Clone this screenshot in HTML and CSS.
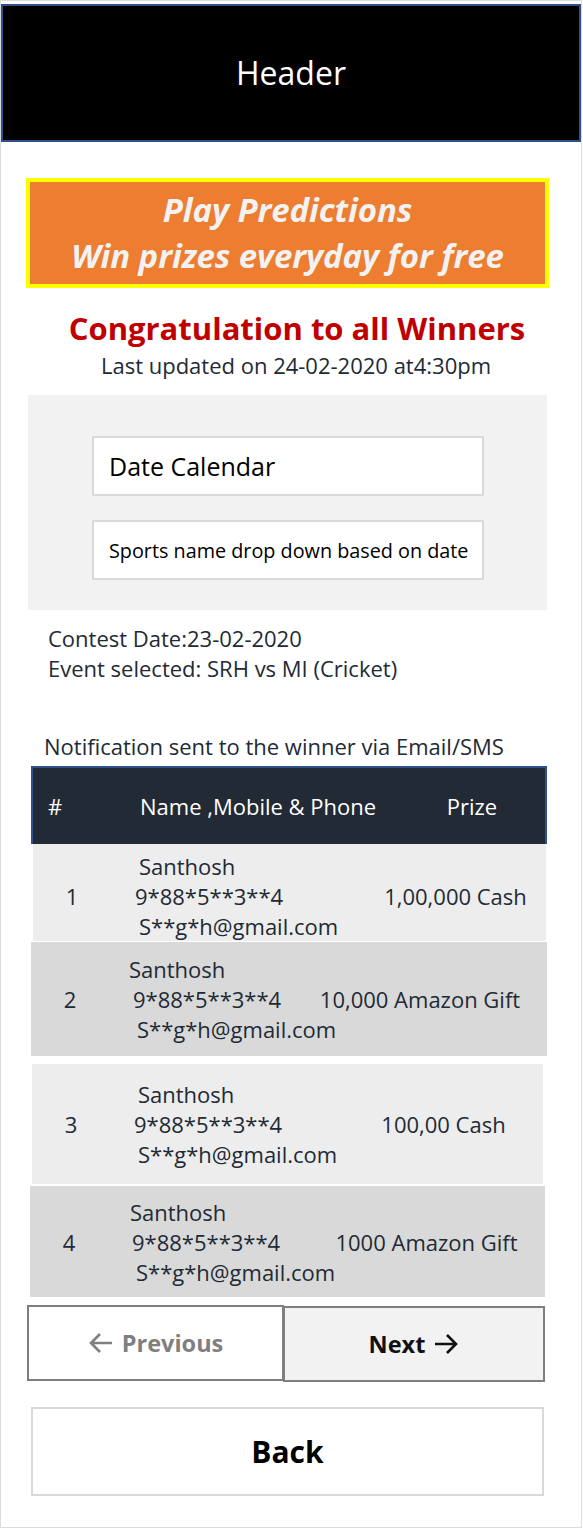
FILE: index.html
```html
<!DOCTYPE html>
<html>
<head>
<meta charset="utf-8">
<link rel="stylesheet" href="styles.css">
</head>
<body>
<div class="page">
  <div class="header">Header</div>
  <div class="banner">
    <div class="banner-inner">
      <div>Play Predictions</div>
      <div>Win prizes everyday for free</div>
    </div>
  </div>
  <h1 class="title">Congratulation to all Winners</h1>
  <div class="subtitle">Last updated on 24-02-2020 at4:30pm</div>
  <div class="filters">
    <div class="field field-date">Date Calendar</div>
    <div class="field field-sport">Sports name drop down based on date</div>
  </div>
  <div class="contest">
    <div>Contest Date:23-02-2020</div>
    <div>Event selected: SRH vs MI (Cricket)</div>
  </div>
  <div class="notice">Notification sent to the winner via Email/SMS</div>
  <div class="table">
    <div class="thead">
      <div class="c-num">#</div>
      <div class="c-name">Name ,Mobile &amp; Phone</div>
      <div class="c-prize">Prize</div>
    </div>
    <div class="row row-light r1">
      <div class="c-num">1</div>
      <div class="c-name"><span class="l1">Santhosh</span><span class="l2">9*88*5**3**4</span><span class="l3">S**g*h@gmail.com</span></div>
      <div class="c-prize">1,00,000 Cash</div>
    </div>
    <div class="row row-dark r2">
      <div class="c-num">2</div>
      <div class="c-name"><span class="l1">Santhosh</span><span class="l2">9*88*5**3**4</span><span class="l3">S**g*h@gmail.com</span></div>
      <div class="c-prize">10,000 Amazon Gift</div>
    </div>
    <div class="row row-light r3">
      <div class="c-num">3</div>
      <div class="c-name"><span class="l1">Santhosh</span><span class="l2">9*88*5**3**4</span><span class="l3">S**g*h@gmail.com</span></div>
      <div class="c-prize">100,00 Cash</div>
    </div>
    <div class="row row-dark r4">
      <div class="c-num">4</div>
      <div class="c-name"><span class="l1">Santhosh</span><span class="l2">9*88*5**3**4</span><span class="l3">S**g*h@gmail.com</span></div>
      <div class="c-prize">1000 Amazon Gift</div>
    </div>
  </div>
  <div class="pager">
    <div class="btn btn-prev">
      <svg width="26" height="22" viewBox="0 0 26 22"><path d="M24 11H3M12 2L3 11l9 9" fill="none" stroke="currentColor" stroke-width="2.6"/></svg>
      <span>Previous</span>
    </div>
    <div class="btn btn-next">
      <span>Next</span>
      <svg width="26" height="22" viewBox="0 0 26 22"><path d="M2 11h21M14 2l9 9-9 9" fill="none" stroke="currentColor" stroke-width="2.6"/></svg>
    </div>
  </div>
  <div class="back">Back</div>
</div>
</body>
</html>
```

FILE: styles.css
```css
* { box-sizing: border-box; }
html, body { margin: 0; padding: 0; background: #fff; }
body { font-family: "Open Sans", Lato, sans-serif; color: #222a35; }

.page {
  width: 582px;
  height: 1528px;
  border: 1px solid #dcdcdc;
  padding-top: 3px;
}

.header {
  height: 138px;
  background: #000;
  border: 2px solid #2f528f;
  color: #fff;
  font-size: 32px;
  display: flex;
  align-items: center;
  justify-content: center;
  padding-bottom: 2px;
}

.banner {
  margin: 36px 32px 0 25px;
  height: 110px;
  border: 4px solid #ffff00;
  background: #ed7d31;
}
.banner-inner {
  height: 100%;
  display: flex;
  flex-direction: column;
  align-items: center;
  justify-content: center;
  color: #f2f2f2;
  font-style: italic;
  font-weight: 700;
  font-size: 33px;
  line-height: 46px;
  letter-spacing: -0.1px;
}

.title {
  margin: 22px 0 0;
  text-align: center;
  color: #c00000;
  font-size: 31px;
  font-weight: 700;
  line-height: 36px;
  padding-left: 12px;
}
.subtitle {
  text-align: center;
  font-size: 22px;
  line-height: 30px;
  margin-top: 4px;
  padding-left: 10px;
  color: #222a35;
}

.filters {
  margin: 15px 34px 0 27px;
  height: 215px;
  background: #f2f2f2;
  padding: 41px 64px 0 64px;
  display: flex;
  flex-direction: column;
  gap: 24px;
}
.field {
  width: 392px;
  height: 60px;
  background: #fff;
  border: 2px solid #d9d9d9;
  display: flex;
  align-items: center;
  padding-left: 15px;
  color: #000;
  white-space: nowrap;
}
.field-date { font-size: 25px; }
.field-sport { font-size: 19.8px; }

.contest {
  margin: 13px 0 0 47px;
  font-size: 22px;
  line-height: 30px;
}
.notice {
  margin: 48px 0 0 43px;
  font-size: 22px;
  line-height: 30px;
}

.table {
  margin: 5px 34px 0 30px;
}
.thead, .row {
  display: grid;
  grid-template-columns: 78px 260px 1fr;
  align-items: center;
}
.thead {
  height: 78px;
  background: #222a35;
  border: 2px solid #2f528f;
  border-bottom: none;
  color: #fff;
  font-size: 22px;
  white-space: nowrap;
}
.thead .c-num { padding-left: 15px; }
.thead .c-name { padding-left: 29px; }
.thead .c-prize { text-align: center; padding-left: 28px; }

.row { font-size: 22px; color: #222a35; white-space: nowrap; }
.row .c-num { text-align: center; }
.row .c-name {
  display: flex;
  flex-direction: column;
  line-height: 30px;
  padding-left: 24px;
}
.row .c-prize { text-align: center; }
.row-light { background: #ededed; }
.row-dark { background: #d9d9d9; }

.r1 { height: 97px; margin-left: 2px; margin-right: 1px; padding-top: 6px; }
.r2 { height: 115px; border-top: 1px solid #fff; }
.r3 { height: 120px; margin-top: 8px; margin-left: 1px; margin-right: 4px; }
.r4 { height: 111px; margin-top: 2px; margin-left: -1px; margin-right: 2px; }

.r1 .l1, .r1 .l3 { margin-left: 4px; }
.r2 .l1 { margin-left: -4px; }
.r2 .l3, .r3 .l1, .r3 .l3, .r4 .l3 { margin-left: 4px; }
.r4 .l1 { margin-left: -2px; }
.r1 .c-prize { margin-left: -6px; }
.r2 .c-prize { margin-left: -76px; }
.r3 .c-prize { margin-left: -26px; }
.r4 .c-prize { margin-left: -60px; }

.pager {
  display: flex;
  margin: 8px 36px 0 26px;
}
.btn {
  height: 76px;
  border: 2px solid #7f7f7f;
  display: flex;
  align-items: center;
  justify-content: center;
  gap: 8px;
  font-size: 23.5px;
  font-weight: 700;
}
.btn-prev {
  width: 257px;
  background: #fff;
  color: #7f7f7f;
}
.btn-next {
  width: 262px;
  margin-left: -1px;
  margin-top: 1px;
  background: #f2f2f2;
  color: #111;
}

.back {
  margin: 25px 37px 0 30px;
  height: 89px;
  border: 2px solid #d9d9d9;
  display: flex;
  align-items: center;
  justify-content: center;
  font-size: 30px;
  font-weight: 700;
  color: #000;
}
```
